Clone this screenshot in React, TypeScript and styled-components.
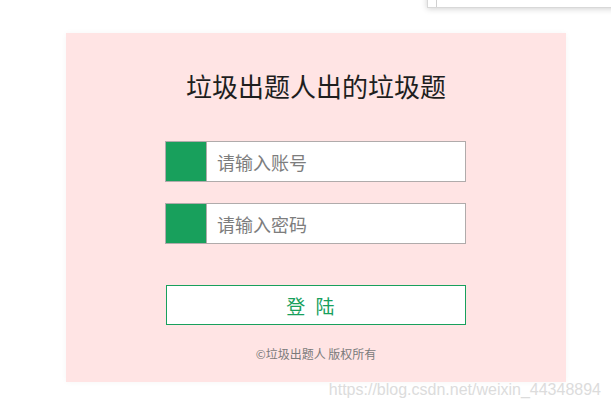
import React from 'react';
import styled, { createGlobalStyle } from 'styled-components';

const GlobalStyle = createGlobalStyle`
  html, body {
    margin: 0;
    padding: 0;
    background: #ffffff;
  }
  body {
    font-family: "Noto Sans CJK SC", "Noto Sans", sans-serif;
  }
`;

const Page = styled.div`
  position: relative;
  width: 611px;
  height: 407px;
  overflow: hidden;
  padding: 33px 0 0 66px;
  box-sizing: border-box;
`;

const Card = styled.div`
  width: 500px;
  height: 349px;
  box-sizing: border-box;
  padding-top: 35px;
  background: #ffe4e4;
  box-shadow: 0 0 6px rgba(0, 0, 0, 0.04);
  display: flex;
  flex-direction: column;
  align-items: center;
`;

const Title = styled.h1`
  margin: 0 0 37px;
  font-size: 26px;
  line-height: 36px;
  font-weight: 400;
  color: #1e1e1e;
`;

const Field = styled.div<{ $gap: number }>`
  width: 301px;
  height: 41px;
  box-sizing: border-box;
  border: 1px solid #b0abab;
  display: flex;
  margin: 0 1px ${(p) => p.$gap}px 0;
  background: #fff;
`;

const Tag = styled.span`
  width: 40px;
  flex: none;
  background: #18a05c;
  border-right: 1px solid #b0abab;
`;

const Input = styled.input`
  flex: 1;
  min-width: 0;
  border: none;
  outline: none;
  padding: 0 0 0 10px;
  font-family: inherit;
  font-size: 18px;
  color: #333;
  background: #fff;
  &::placeholder {
    color: #7d7d7d;
  }
`;

const LoginButton = styled.button`
  width: 300px;
  height: 40px;
  box-sizing: border-box;
  border: 1px solid #18a05c;
  background: #fff;
  color: #18a05c;
  font-family: inherit;
  font-size: 19px;
  letter-spacing: 3px;
  padding: 0 8px 0 0;
  cursor: pointer;
`;

const Footer = styled.p`
  margin: 21px 0 0;
  font-size: 12px;
  line-height: 16px;
  color: #7a7a7a;
`;

const Popup = styled.div`
  position: absolute;
  top: -20px;
  left: 427px;
  width: 220px;
  height: 26px;
  background: #fff;
  border: 1px solid #d8d8d8;
  box-shadow: 0 1px 6px rgba(0, 0, 0, 0.18);
  &::before {
    content: '';
    position: absolute;
    left: 8px;
    top: 0;
    bottom: 0;
    border-left: 1px solid #d0d0d0;
  }
`;

const Watermark = styled.div`
  position: absolute;
  top: 380px;
  right: 10px;
  font-family: "Liberation Sans", Arial, sans-serif;
  font-size: 16px;
  line-height: 20px;
  color: #dcdcdc;
  text-shadow: 0 0 2px #fff;
`;

export default function App() {
  return (
    <React.Fragment>
      <GlobalStyle />
      <Page>
        <Card>
          <Title>垃圾出题人出的垃圾题</Title>
          <Field $gap={21}>
            <Tag />
            <Input placeholder="请输入账号" />
          </Field>
          <Field $gap={41}>
            <Tag />
            <Input type="password" placeholder="请输入密码" />
          </Field>
          <LoginButton>登 陆</LoginButton>
          <Footer>©垃圾出题人 版权所有</Footer>
        </Card>
        <Popup />
        <Watermark>https://blog.csdn.net/weixin_44348894</Watermark>
      </Page>
    </React.Fragment>
  );
}
